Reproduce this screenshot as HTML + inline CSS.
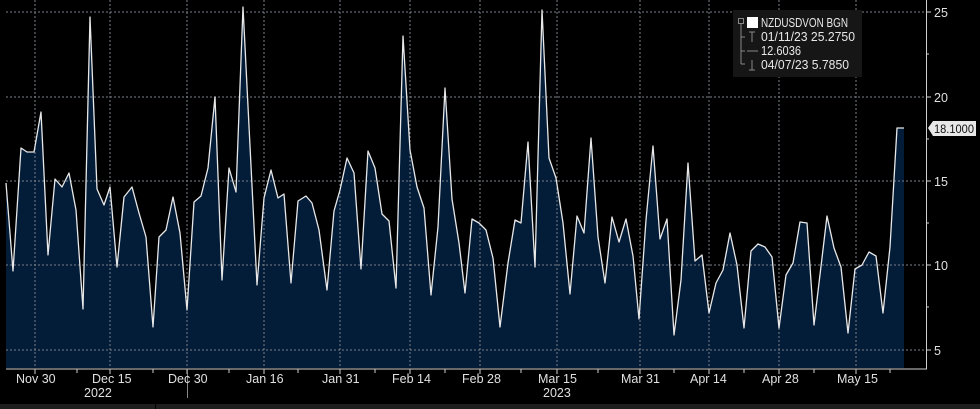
<!DOCTYPE html>
<html><head><style>
html,body{margin:0;padding:0;background:#000;}
svg{display:block;}
text{font-family:"Liberation Sans",sans-serif;}
</style></head><body>
<svg width="980" height="409" viewBox="0 0 980 409" xmlns="http://www.w3.org/2000/svg">
<rect width="980" height="409" fill="#000"/>
<rect x="0" y="404" width="980" height="5" fill="#1e1e1e"/>
<rect x="155" y="404" width="1" height="5" fill="#000"/>
<polygon fill="#031c38" points="6,368 6,183 13,271 21,148 27,152 34,152 41,112 48,255 55,179 62,187 69,173 76,210 83,309 90,17 97,189 104,205 110,187 117,267 124,197 132,187 139,213 146,237 153,327 159,237 166,230 173,197 180,233 187,310 194,202 201,196 208,168 215,97 222,280 229,168 236,192 243,7 257,285 264,198 271,170 278,198 284,194 291,283 298,201 306,196 312,203 319,230 327,290 334,211 340,190 347,158 354,173 361,269 368,151 375,168 382,214 389,221 396,288 403,36 410,150 417,187 424,208 431,295 438,227 445,88 452,199 459,243 465,293 472,219 479,223 486,230 493,258 500,327 508,263 515,220 521,223 528,142 535,267 542,10 549,158 556,178 563,223 570,294 577,216 584,233 591,138 598,237 605,283 612,217 619,242 626,219 633,256 639,319 646,220 653,146 660,239 667,219 674,335 681,280 688,163 695,261 702,255 709,313 716,283 723,270 730,233 737,265 744,328 751,251 758,244 765,247 772,257 779,328 786,275 793,263 800,222 807,223 814,325 827,216 834,248 841,267 848,333 855,269 862,265 869,252 876,256 883,313 890,247 897,128 904,128 904,368"/>
<g stroke="#7a8088" stroke-width="1" stroke-dasharray="2,2" fill="none">
<line x1="6" y1="12" x2="926" y2="12"/><line x1="6" y1="97" x2="926" y2="97"/><line x1="6" y1="181" x2="926" y2="181"/><line x1="6" y1="265" x2="926" y2="265"/><line x1="6" y1="350" x2="926" y2="350"/>
<line x1="35" y1="0" x2="35" y2="368"/><line x1="110" y1="0" x2="110" y2="368"/><line x1="187" y1="0" x2="187" y2="368"/><line x1="264" y1="0" x2="264" y2="368"/><line x1="340" y1="0" x2="340" y2="368"/><line x1="410" y1="0" x2="410" y2="368"/><line x1="480" y1="0" x2="480" y2="368"/><line x1="557" y1="0" x2="557" y2="368"/><line x1="640" y1="0" x2="640" y2="368"/><line x1="709" y1="0" x2="709" y2="368"/><line x1="779" y1="0" x2="779" y2="368"/><line x1="856" y1="0" x2="856" y2="368"/>
</g>
<polyline fill="none" stroke="#e8e8e8" stroke-width="1.3" stroke-linejoin="round" points="6,183 13,271 21,148 27,152 34,152 41,112 48,255 55,179 62,187 69,173 76,210 83,309 90,17 97,189 104,205 110,187 117,267 124,197 132,187 139,213 146,237 153,327 159,237 166,230 173,197 180,233 187,310 194,202 201,196 208,168 215,97 222,280 229,168 236,192 243,7 257,285 264,198 271,170 278,198 284,194 291,283 298,201 306,196 312,203 319,230 327,290 334,211 340,190 347,158 354,173 361,269 368,151 375,168 382,214 389,221 396,288 403,36 410,150 417,187 424,208 431,295 438,227 445,88 452,199 459,243 465,293 472,219 479,223 486,230 493,258 500,327 508,263 515,220 521,223 528,142 535,267 542,10 549,158 556,178 563,223 570,294 577,216 584,233 591,138 598,237 605,283 612,217 619,242 626,219 633,256 639,319 646,220 653,146 660,239 667,219 674,335 681,280 688,163 695,261 702,255 709,313 716,283 723,270 730,233 737,265 744,328 751,251 758,244 765,247 772,257 779,328 786,275 793,263 800,222 807,223 814,325 827,216 834,248 841,267 848,333 855,269 862,265 869,252 876,256 883,313 890,247 897,128 904,128"/>
<g stroke="#cfcfcf" stroke-width="1">
<line x1="6" y1="369" x2="927" y2="369"/>
<line x1="926.5" y1="0" x2="926.5" y2="369"/>
<line x1="926" y1="12" x2="931" y2="12"/><line x1="926" y1="54" x2="929" y2="54"/><line x1="926" y1="97" x2="931" y2="97"/><line x1="926" y1="139" x2="929" y2="139"/><line x1="926" y1="181" x2="931" y2="181"/><line x1="926" y1="223" x2="929" y2="223"/><line x1="926" y1="265" x2="931" y2="265"/><line x1="926" y1="307" x2="929" y2="307"/><line x1="926" y1="350" x2="931" y2="350"/>
<line x1="35" y1="369" x2="35" y2="374"/><line x1="77" y1="369" x2="77" y2="373"/><line x1="110" y1="369" x2="110" y2="374"/><line x1="153" y1="369" x2="153" y2="373"/><line x1="187" y1="369" x2="187" y2="374"/><line x1="229" y1="369" x2="229" y2="373"/><line x1="264" y1="369" x2="264" y2="374"/><line x1="298" y1="369" x2="298" y2="373"/><line x1="340" y1="369" x2="340" y2="374"/><line x1="375" y1="369" x2="375" y2="373"/><line x1="410" y1="369" x2="410" y2="374"/><line x1="445" y1="369" x2="445" y2="373"/><line x1="480" y1="369" x2="480" y2="374"/><line x1="521" y1="369" x2="521" y2="373"/><line x1="557" y1="369" x2="557" y2="374"/><line x1="598" y1="369" x2="598" y2="373"/><line x1="640" y1="369" x2="640" y2="374"/><line x1="674" y1="369" x2="674" y2="373"/><line x1="709" y1="369" x2="709" y2="374"/><line x1="744" y1="369" x2="744" y2="373"/><line x1="779" y1="369" x2="779" y2="374"/><line x1="814" y1="369" x2="814" y2="373"/><line x1="856" y1="369" x2="856" y2="374"/><line x1="890" y1="369" x2="890" y2="373"/>
</g>
<line x1="187.5" y1="370" x2="187.5" y2="398" stroke="#888" stroke-width="1"/>
<g fill="#e0e0e0" font-size="12.5">
<text x="934" y="17">25</text><text x="934" y="102">20</text><text x="934" y="186">15</text><text x="934" y="270">10</text><text x="934" y="355">5</text>
<text x="16" y="383">Nov 30</text><text x="92" y="383">Dec 15</text><text x="168" y="383">Dec 30</text><text x="246" y="383">Jan 16</text><text x="322" y="383">Jan 31</text><text x="392" y="383">Feb 14</text><text x="462" y="383">Feb 28</text><text x="538" y="383">Mar 15</text><text x="621" y="383">Mar 31</text><text x="690" y="383">Apr 14</text><text x="762" y="383">Apr 28</text><text x="837" y="383">May 15</text>
<text x="84" y="397">2022</text><text x="543" y="397">2023</text>
</g>
<polygon points="928,128 933,121 976,121 976,136 933,136" fill="#e8e8e8"/>
<text x="934" y="133" font-size="12" fill="#111" textLength="40" lengthAdjust="spacingAndGlyphs">18.1000</text>
<rect x="733" y="10" width="129" height="67" fill="#161616"/>
<g stroke="#888" fill="none" stroke-width="1">
<rect x="738.5" y="18.5" width="5" height="5"/>
<line x1="741" y1="24" x2="741" y2="64"/>
<line x1="741" y1="37" x2="745" y2="37"/><line x1="741" y1="51" x2="745" y2="51"/><line x1="741" y1="64" x2="745" y2="64"/>
<line x1="752" y1="32" x2="752" y2="42"/><line x1="749" y1="32" x2="755" y2="32"/>
<line x1="747" y1="51" x2="758" y2="51"/>
<line x1="752" y1="60" x2="752" y2="70"/><line x1="749" y1="70" x2="755" y2="70"/>
</g>
<rect x="747" y="17" width="11" height="11" fill="#fff"/>
<g fill="#e8e8e8" font-size="12.5">
<text x="761" y="27" textLength="87" lengthAdjust="spacingAndGlyphs">NZDUSDVON BGN</text>
<text x="761" y="41" textLength="94" lengthAdjust="spacingAndGlyphs">01/11/23 25.2750</text>
<text x="761" y="55" textLength="40" lengthAdjust="spacingAndGlyphs">12.6036</text>
<text x="761" y="69" textLength="88" lengthAdjust="spacingAndGlyphs">04/07/23 5.7850</text>
</g>
</svg>
</body></html>
